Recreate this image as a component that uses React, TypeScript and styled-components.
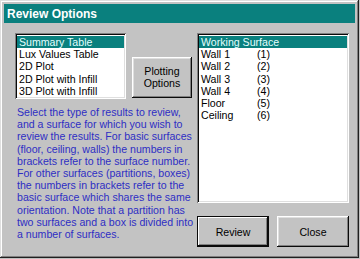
import React from "react";
import styled, { createGlobalStyle } from "styled-components";

const resultTypes = [
  "Summary Table",
  "Lux Values Table",
  "2D Plot",
  "2D Plot with Infill",
  "3D Plot with Infill",
];

const surfaces: { name: string; num?: string }[] = [
  { name: "Working Surface" },
  { name: "Wall 1", num: "(1)" },
  { name: "Wall 2", num: "(2)" },
  { name: "Wall 3", num: "(3)" },
  { name: "Wall 4", num: "(4)" },
  { name: "Floor", num: "(5)" },
  { name: "Ceiling", num: "(6)" },
];

const helpLines = [
  "Select the type of results to review,",
  "and a surface for which you wish to",
  "review the results. For basic surfaces",
  "(floor, ceiling, walls) the numbers in",
  "brackets refer to the surface number.",
  "For other surfaces (partitions, boxes)",
  "the numbers in brackets refer to the",
  "basic surface which shares the same",
  "orientation. Note that a partition has",
  "two surfaces and a box is divided into",
  "a number of surfaces.",
];

const App = () => {
  return (
    <>
      <GlobalStyle />
      <Window>
        <TitleBar>Review Options</TitleBar>

        <Body>
          <LeftColumn>
            <TopRow>
              <ListBox $width={111} $height={66}>
                {resultTypes.map((item, i) => (
                  <ListItem key={item} $selected={i === 0}>
                    {item}
                  </ListItem>
                ))}
              </ListBox>

              <PlottingButton>
                Plotting
                <br />
                Options
              </PlottingButton>
            </TopRow>

            <HelpText>
              {helpLines.map((line) => (
                <div key={line}>{line}</div>
              ))}
            </HelpText>
          </LeftColumn>

          <RightColumn>
            <ListBox $width={152} $height={170}>
              {surfaces.map((s, i) => (
                <ListItem key={s.name} $selected={i === 0}>
                  <SurfaceName>{s.name}</SurfaceName>
                  {s.num}
                </ListItem>
              ))}
            </ListBox>

            <ButtonRow>
              <DialogButton $default>Review</DialogButton>
              <DialogButton>Close</DialogButton>
            </ButtonRow>
          </RightColumn>
        </Body>
      </Window>
    </>
  );
};

const GlobalStyle = createGlobalStyle`
  html, body {
    margin: 0;
    padding: 0;
    background: #c0c0c0;
  }

  body {
    font-family: "Liberation Sans", Arial, sans-serif;
  }
`;

const Window = styled.div`
  width: 359px;
  height: 258px;
  box-sizing: border-box;
  padding: 4px;

  display: flex;
  flex-direction: column;

  background: #c3c3c3;
  box-shadow: inset -1px -1px #202020, inset 1px 1px #dfdfdf,
    inset -2px -2px #808080, inset 2px 2px #ffffff;
`;

const TitleBar = styled.div`
  height: 19px;
  padding-left: 3px;

  display: flex;
  align-items: center;

  background: #0a807e;
  color: #ffffff;
  font-size: 12px;
  font-weight: bold;
`;

const Body = styled.div`
  padding: 10px 0 0 11px;

  display: flex;
  gap: 4px;
`;

const LeftColumn = styled.div`
  width: 178px;

  display: flex;
  flex-direction: column;
`;

const TopRow = styled.div`
  display: flex;
  align-items: flex-end;
  gap: 6px;
`;

const ListBox = styled.div<{ $width: number; $height: number }>`
  width: ${(p) => p.$width}px;
  height: ${(p) => p.$height}px;
  box-sizing: border-box;
  padding: 3px 2px 2px 2px;

  background: #ffffff;
  box-shadow: inset 1px 1px #808080, inset -1px -1px #ffffff,
    inset 2px 2px #0a0a0a, inset -2px -2px #dfdfdf;
`;

const ListItem = styled.div<{ $selected?: boolean }>`
  height: 12.2px;
  padding-left: 2px;

  display: flex;
  align-items: center;

  font-size: 10.6px;
  white-space: nowrap;
  color: ${(p) => (p.$selected ? "#e4ffff" : "#000000")};
  background: ${(p) => (p.$selected ? "#0a807e" : "transparent")};
`;

const SurfaceName = styled.span`
  width: 56px;
`;

const RaisedButton = styled.div`
  box-sizing: border-box;

  display: flex;
  align-items: center;
  justify-content: center;
  text-align: center;

  background: #c3c3c3;
  color: #000000;
  font-size: 10.6px;
  box-shadow: inset -1px -1px #0a0a0a, inset 1px 1px #ffffff,
    inset -2px -2px #808080, inset 2px 2px #dfdfdf;
`;

const PlottingButton = styled(RaisedButton)`
  width: 60px;
  height: 41px;
  margin-bottom: 1px;
  line-height: 11.5px;
`;

const HelpText = styled.div`
  margin-top: 7px;
  padding-left: 2px;

  color: #2e2ec4;
  font-size: 10.6px;
  line-height: 12.2px;
  white-space: nowrap;
`;

const RightColumn = styled.div`
  width: 152px;

  display: flex;
  flex-direction: column;
`;

const ButtonRow = styled.div`
  margin-top: 13px;

  display: flex;
  gap: 8px;
`;

const DialogButton = styled(RaisedButton)<{ $default?: boolean }>`
  width: 72px;
  height: 31px;

  ${(p) =>
    p.$default &&
    `
    box-shadow: inset 0 0 0 1px #0a0a0a, inset -2px -2px #0a0a0a,
      inset 2px 2px #ffffff, inset -3px -3px #808080;
  `}
`;

export default App;
